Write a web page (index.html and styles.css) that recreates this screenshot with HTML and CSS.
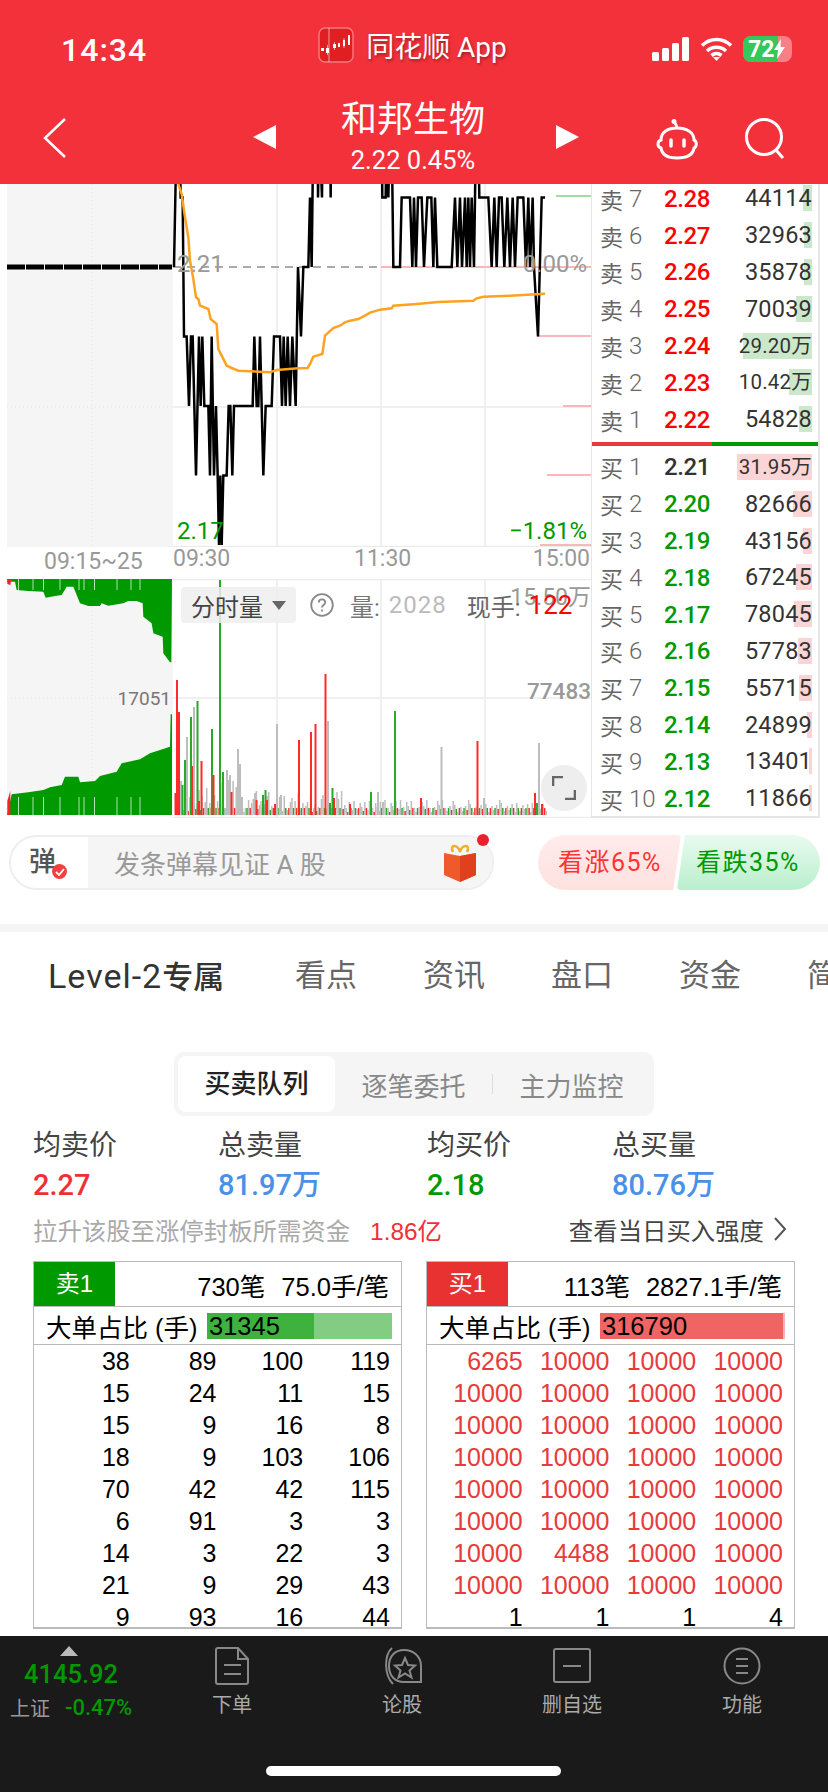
FILE: index.html
```html
<!DOCTYPE html>
<html lang="zh-CN">
<head>
    <meta charset="UTF-8">
    <meta name="viewport" content="width=device-width, initial-scale=1.0">
    <title>和邦生物</title>
    <link rel="stylesheet" href="styles.css">
</head>
<body>
    <header class="top">
        <div class="status">
            <span class="clock">14:34</span>
            <div class="app-name">
                <svg class="logo" width="36" height="36" viewBox="0 0 36 36">
                    <rect x="1" y="1" width="34" height="34" rx="6" fill="#e01f22" stroke="#f7777c" stroke-width="1.5"/>
                    <path d="M3 24h3v-3H3zM8 26h3v-5H8zM15 21h3v-4h-3zM20 20h2v-4h-2zM25 19h2v-6h-2zM30 18h2V8h-2z" fill="#fff"/>
                    <path d="M9.500 18v10M16.500 15v8M26 11v10M11 1v34" stroke="#fff" stroke-width=".8" stroke-opacity=".7"/>
                </svg>
                <span>同花顺 App</span>
            </div>
            <div class="status-icons">
                <svg width="38" height="24" viewBox="0 0 38 24" fill="#fff">
                    <rect x="0" y="15" width="7" height="9" rx="1.5"/>
                    <rect x="10" y="11" width="7" height="13" rx="1.5"/>
                    <rect x="20" y="6" width="7" height="18" rx="1.5"/>
                    <rect x="30" y="0" width="7" height="24" rx="1.5"/>
                </svg>
                <svg width="33" height="24" viewBox="0 0 33 24" fill="none" stroke="#fff" stroke-width="3.6">
                    <path d="M2 8.500c8.500-8 20.500-8 29 0M7 14c5.500-5 13.500-5 19 0M11.500 18.500c3-2.500 7-2.500 10 0"/>
                    <path d="M16.500 24l-3.500-4h7z" fill="#fff" stroke="none"/>
                </svg>
                <div class="battery">
                    <div class="battery-fill"></div>
                    <span>72</span>
                    <svg width="11" height="20" viewBox="0 0 11 20"><path d="M7 0L0 11h4l-1 9 8-12H6.500z" fill="#fff"/></svg>
                </div>
            </div>
        </div>
        <div class="nav">
            <svg class="back" width="24" height="42" viewBox="0 0 24 42" fill="none" stroke="#fff" stroke-width="2.500"><path d="M22 2L2 21l20 19"/></svg>
            <div class="stock">
                <i class="tri-left"></i>
                <div class="stock-name">
                    <h1>和邦生物</h1>
                    <p>2.22 0.45%</p>
                </div>
                <i class="tri-right"></i>
            </div>
            <div class="nav-icons">
                <svg width="46" height="42" viewBox="0 0 46 42" fill="none" stroke="#fff" stroke-width="3">
                    <circle cx="19" cy="3.500" r="2.500" fill="#fff" stroke="none"/>
                    <path d="M19 4c2 2 3 4 3 6"/>
                    <path d="M6 22c0-8 7-12 16-12s17 4 17 12c3 1 3 7 0 8-1 7-8 10-17 10S7 37 6 30c-4-1-4-7 0-8z"/>
                    <path d="M16 22v6M29 22v6" stroke-linecap="round" stroke-width="3.500"/>
                </svg>
                <svg width="42" height="42" viewBox="0 0 42 42" fill="none" stroke="#fff" stroke-width="3">
                    <circle cx="19" cy="19" r="17.500"/>
                    <path d="M31 32l7 8"/>
                </svg>
            </div>
        </div>
    </header>

    <main class="quote">
        <div class="charts">
            <div class="price-chart">
                <svg id="priceSvg" class="chart-svg" viewBox="7 184 584 363"></svg>
                <span class="tag tag-base">2.21</span>
                <span class="tag tag-pct">0.00%</span>
                <span class="tag tag-low">2.17</span>
                <span class="tag tag-lowpct">−1.81%</span>
            </div>
            <div class="times">
                <span class="time-pre">09:15~25</span>
                <span class="time-open">09:30</span>
                <span class="time-mid">11:30</span>
                <span class="time-end">15:00</span>
            </div>
            <div class="volume-chart">
                <svg id="volumeSvg" class="chart-svg" viewBox="7 579 584 239"></svg>
                <span class="vol-pre">17051</span>
                <span class="vol-max">15.50万</span>
                <span class="vol-mid">77483</span>
                <div class="vol-bar">
                    <div class="vol-chip">分时量<i class="caret"></i></div>
                    <svg width="24" height="24" viewBox="0 0 24 24" fill="none" stroke="#888" stroke-width="1.800">
                        <circle cx="12" cy="12" r="10.800"/>
                        <path d="M8.800 9.500c0-4.300 6.400-4.300 6.400 0 0 2.500-3.200 2.500-3.200 5"/>
                        <path d="M12 16.500v2"/>
                    </svg>
                    <span class="vol-key vol-key-first">量:</span>
                    <span class="vol-num">2028</span>
                    <span class="vol-key vol-key-now">现手:</span>
                    <span class="vol-now">122</span>
                </div>
                <div class="expand">
                    <svg width="24" height="24" viewBox="0 0 24 24" fill="none" stroke="#666" stroke-width="2.600"><path d="M1 10V1h10M23 14v9H13"/></svg>
                </div>
            </div>
        </div>
        <div class="book">
            <div id="sellRows" class="book-sell"></div>
            <div class="book-line"></div>
            <div id="buyRows" class="book-buy"></div>
        </div>
    </main>

    <section class="comment-bar">
        <div class="bullet">
            <div class="bullet-icon">弹<i class="bullet-check"><svg width="10" height="8" viewBox="0 0 10 8" fill="none" stroke="#fff" stroke-width="1.800"><path d="M1 4l3 3 5-6"/></svg></i></div>
            <div class="bullet-input">
                <span>发条弹幕见证 A 股</span>
                <svg width="34" height="38" viewBox="0 0 34 38">
                    <path d="M10 8C6 0 15 0 17 8c2-8 11-8 7 0" fill="none" stroke="#f0ac2c" stroke-width="2.500"/>
                    <path d="M1 9l16 3 16-3v22l-16 7-16-7z" fill="#ee5a2b"/>
                    <path d="M17 12l16-3v22l-16 7z" fill="#e1401f"/>
                </svg>
                <i class="bullet-dot"></i>
            </div>
        </div>
        <div class="vote">
            <div class="vote-up">看涨65%</div>
            <div class="vote-down">看跌35%</div>
        </div>
    </section>

    <nav class="tabs">
        <span class="tab-on"><em>Level-2</em>专属</span>
        <span>看点</span>
        <span>资讯</span>
        <span>盘口</span>
        <span>资金</span>
        <span>简况</span>
    </nav>

    <div class="segment">
        <span class="seg-on">买卖队列</span>
        <span>逐笔委托</span>
        <i class="seg-sep"></i>
        <span>主力监控</span>
    </div>

    <div class="stats">
        <div><label>均卖价</label><b class="red">2.27</b></div>
        <div><label>总卖量</label><b class="blue">81.97万</b></div>
        <div><label>均买价</label><b class="green">2.18</b></div>
        <div><label>总买量</label><b class="blue">80.76万</b></div>
    </div>

    <div class="needs">
        <span class="needs-text">拉升该股至涨停封板所需资金</span>
        <span class="needs-num">1.86亿</span>
        <span class="needs-link">查看当日买入强度
            <svg width="14" height="24" viewBox="0 0 14 24" fill="none" stroke="#555" stroke-width="2"><path d="M2 1l10 11L2 23"/></svg>
        </span>
    </div>

    <div class="queues">
        <div class="queue">
            <div class="queue-head">
                <span class="queue-tag tag-sell">卖1</span>
                <span>730笔</span>
                <span>75.0手/笔</span>
            </div>
            <div class="queue-big">
                <span class="big-label">大单占比 (手)</span>
                <div class="big-bar bar-sell"><div class="big-fill" style="width:57.6%"></div><span>31345</span></div>
            </div>
            <div id="sellQueue" class="queue-body"></div>
        </div>
        <div class="queue">
            <div class="queue-head">
                <span class="queue-tag tag-buy">买1</span>
                <span>113笔</span>
                <span>2827.1手/笔</span>
            </div>
            <div class="queue-big">
                <span class="big-label">大单占比 (手)</span>
                <div class="big-bar bar-buy"><div class="big-fill" style="width:99%"></div><span>316790</span></div>
            </div>
            <div id="buyQueue" class="queue-body queue-red"></div>
        </div>
    </div>

    <footer class="bottom">
        <div class="foot-main">
            <div class="index">
                <i class="index-arrow"></i>
                <div class="index-num">4145.92</div>
                <div class="index-line"><span>上证</span><b>-0.47%</b></div>
            </div>
            <div class="foot-tab">
                <svg width="36" height="38" viewBox="0 0 36 38" fill="none" stroke="#888" stroke-width="2">
                    <path d="M2 3a2 2 0 0 1 2-2h20l10 11v23a2 2 0 0 1-2 2H4a2 2 0 0 1-2-2z"/>
                    <path d="M24 1v11h10M10 18h17M10 27h17"/>
                </svg>
                <span>下单</span>
            </div>
            <div class="foot-tab">
                <svg width="42" height="38" viewBox="0 0 42 38" fill="none" stroke="#888" stroke-width="2">
                    <path d="M11 1C3 8 3 28 12 37"/>
                    <path d="M8 19C8 9 14 3 23 3s17 6 17 16v16H23C14 35 8 29 8 19z"/>
                    <path d="M24 11l3 7 7 .5-5.500 5 2 7-6.500-4-6.500 4 2-7-5.500-5 7-.5z"/>
                </svg>
                <span>论股</span>
            </div>
            <div class="foot-tab">
                <svg width="38" height="38" viewBox="0 0 38 38" fill="none" stroke="#888" stroke-width="2">
                    <rect x="1" y="2" width="36" height="33" rx="2"/>
                    <path d="M10 19h18"/>
                </svg>
                <span>删自选</span>
            </div>
            <div class="foot-tab">
                <svg width="38" height="38" viewBox="0 0 38 38" fill="none" stroke="#888" stroke-width="2">
                    <circle cx="19" cy="19" r="17.500"/>
                    <path d="M13 12h12M13 19h12M13 26h12"/>
                </svg>
                <span>功能</span>
            </div>
        </div>
        <div class="home-bar"></div>
    </footer>

    <script>
        let sellData = [
            ["7", "2.28", "44114", 9.5], ["6", "2.27", "32963", 8], ["5", "2.26", "35878", 8],
            ["4", "2.25", "70039", 16], ["3", "2.24", "29.20万", 69], ["2", "2.23", "10.42万", 23],
            ["1", "2.22", "54828", 13]
        ];
        let buyData = [
            ["1", "2.21", "31.95万", 75], ["2", "2.20", "82666", 19], ["3", "2.19", "43156", 9.5],
            ["4", "2.18", "67245", 16], ["5", "2.17", "78045", 18], ["6", "2.16", "57783", 14],
            ["7", "2.15", "55715", 13], ["8", "2.14", "24899", 5.5], ["9", "2.13", "13401", 3],
            ["10", "2.12", "11866", 3]
        ];

        let bookRow = (name, row, priceClass, barClass) => {
            let small = row[2].includes("万") ? " book-qty-small" : "";
            return `
                <div class="book-row">
                    <span class="book-name">${name}<em>${row[0]}</em></span>
                    <span class="book-price ${priceClass}">${row[1]}</span>
                    <span class="book-qty${small}">
                        <i class="${barClass}" style="width:${row[3]}px"></i>
                        <b>${row[2]}</b>
                    </span>
                </div>`;
        };

        document.querySelector("#sellRows").innerHTML = sellData.map((r) => bookRow("卖", r, "price-red", "bar-green")).join("");
        document.querySelector("#buyRows").innerHTML = buyData.map((r, i) => bookRow("买", r, i === 0 ? "price-flat" : "price-green", "bar-red")).join("");

        let sellQueue = [
            [38, 89, 100, 119], [15, 24, 11, 15], [15, 9, 16, 8], [18, 9, 103, 106], [70, 42, 42, 115],
            [6, 91, 3, 3], [14, 3, 22, 3], [21, 9, 29, 43], [9, 93, 16, 44]
        ];
        let t = 10000;
        let buyQueue = [
            [6265, t, t, t], [t, t, t, t], [t, t, t, t], [t, t, t, t], [t, t, t, t],
            [t, t, t, t], [t, 4488, t, t], [t, t, t, t], [1, 1, 1, 4]
        ];

        let queueHtml = (rows) => rows.map((row) => {
            let cls = row[0] === 1 ? "queue-row queue-last" : "queue-row";
            return `<div class="${cls}">` + row.map((n) => `<span>${n}</span>`).join("") + "</div>";
        }).join("");

        document.querySelector("#sellQueue").innerHTML = queueHtml(sellQueue);
        document.querySelector("#buyQueue").innerHTML = queueHtml(buyQueue);

        // price chart, points are [x, level]; level 0 is 2.21 and each step is one cent down
        let levelY = (lv) => 267 + lv * 69.5;
        let part1 = [[12,0],[20,-2],[28,-2],[32,-1],[38,-1],[42,1],[50,1],[57,2],[63,1],[68,1],[78,3],[87,1],[92,2],[97,1],[103,2],[115,2],[120,3],[125,1],[132,3],[138,2],[143,3],[147,4],[151,3],[155,4],[160,3],[170,3],[176,2],[181,2],[187,3],[192,2],[248,2],[253,1],[260,2],[265,2],[270,1],[280,3],[287,2],[305,2],[312,1],[330,1],[336,2],[341,1],[347,2],[353,1],[360,2],[367,1],[377,2],[384,0],[393,1],[400,0],[415,0],[420,-1],[425,0],[430,-2],[443,-2],[444,-1],[448,-2],[456,-1],[458,-2],[480,-2],[482,-1],[484,-2]];
        let part2 = [[95,-2],[97,-1],[107,-1],[110,-2],[115,-1],[120,-2],[125,-2],[130,0],[150,0],[155,-1],[180,-1],[187,0],[192,-1],[198,0],[204,-1],[215,-1],[222,0],[232,-1],[244,-1],[250,0],[255,-1],[262,0],[305,0],[315,-1],[322,0],[330,-1],[336,0],[345,-1],[350,0],[355,-1],[360,0],[365,-1],[372,0],[378,-2],[385,-2],[388,-1],[415,-1],[425,0],[433,-1],[440,0],[447,-1],[455,-1],[463,0],[472,-1],[480,0],[488,-1],[495,0],[503,-1],[520,-1],[528,0],[535,-1],[540,0],[548,-1],[552,0],[564,1],[575,-1],[585,-1]];
        let avg1 = [[25,0],[35,30],[45,100],[55,160],[60,230],[70,285],[78,340],[85,345],[90,365],[115,375],[122,405],[140,420],[145,495],[155,515],[170,545],[185,552],[205,560],[300,565],[320,558],[385,553],[413,552],[420,540],[430,518],[457,510],[465,455],[490,432],[510,425],[525,415],[540,410]];
        let avg2 = [[25,405],[45,395],[60,386],[90,377],[125,373],[130,365],[200,360],[265,354],[370,350],[380,343],[400,338],[480,335],[585,329]];

        let linePoints = part1.map((p) => `${170 + p[0] / 3},${levelY(p[1])}`)
            .concat(part2.map((p) => `${350 + p[0] / 3},${levelY(p[1])}`)).join(" ");
        let avgPoints = avg1.map((p) => `${170 + p[0] / 3},${184 + p[1] / 3}`)
            .concat(avg2.map((p) => `${350 + p[0] / 3},${184 + p[1] / 3}`)).join(" ");

        let depthMarks = [[556, 196, "#a5dba5"], [381, 267, "#f6b8b8"], [537, 336, "#f6b8b8"], [563, 406, "#f6b8b8"], [547, 475, "#f6b8b8"], [540, 545, "#f6b8b8"]];
        let depthHtml = depthMarks.map((d) => `<path d="M${d[0]} ${d[1]}H591" stroke="${d[2]}" stroke-width="2"/>`).join("");

        document.querySelector("#priceSvg").innerHTML = `
            <rect x="7" y="184" width="166" height="363" fill="#f5f5f5"/>
            <path d="M92 184V547M7 407H173" stroke="#e6e6e6" stroke-dasharray="1 3"/>
            <path d="M277 184V547M381 184V547M485 184V547M173 407H591M173 546.500H591" stroke="#ececec" stroke-width="1.500"/>
            ${depthHtml}
            <path d="M173 267H381" stroke="#aaa" stroke-width="2" stroke-dasharray="8 6"/>
            <path d="M7 267H172" stroke="#000" stroke-width="5" stroke-dasharray="18 1"/>
            <polyline points="${linePoints}" fill="none" stroke="#000" stroke-width="2.500"/>
            <polyline points="${avgPoints}" fill="none" stroke="#ffa21f" stroke-width="2.500"/>`;

        // pre-market volume, traced in crop pixels of 3x
        let preTop = [[22,20],[45,20],[50,45],[85,48],[130,50],[137,68],[165,63],[185,60],[200,35],[220,35],[240,85],[265,93],[300,93],[305,85],[325,92],[370,85],[385,78],[410,78],[428,85],[430,125],[455,145],[460,175],[488,185],[490,235],[510,262],[514,262]];
        let preBottom = [[22,718],[30,680],[35,658],[85,652],[130,645],[150,637],[185,630],[195,605],[235,605],[240,622],[285,618],[300,603],[350,590],[365,565],[420,553],[450,535],[510,515],[512,418],[516,418]];
        let toPre = (p) => `${p[0] / 3},${575 + p[1] / 3}`;
        let topShape = "7.300,579 " + preTop.map(toPre).join(" ") + " 172,579";
        let bottomShape = preBottom.map(toPre).join(" ") + " 172,815 7.300,815";
        let gaps = [18.500, 33, 43.500, 60, 79, 84, 94.500, 117, 131, 140];
        let gapHtml = gaps.map((x) => `<path d="M${x} 579V590M${x} 797V815" stroke="#fff" stroke-opacity=".7" stroke-width="1"/>`).join("");

        let colors = { r: "#ff2a2a", g: "#2aa82a", s: "#bdbdbd" };
        let tall = [
            [174.5,793,"r"],[176,680,"r"],[178,712,"r"],[180,781,"s"],[181.5,785,"g"],[184,760,"g"],[186,737,"s"],[190,717,"g"],[191.5,766,"r"],[193,707,"s"],[196.500,701,"g"],[198,801,"r"],[200.500,761,"r"],
            [211,729,"g"],[212.500,775,"r"],[219,580,"g"],[222,772,"g"],[226,770,"s"],[229,775,"s"],[230.500,792,"r"],[237,749,"s"],[239,764,"s"],[241,797,"s"],[254,793,"s"],[255.500,800,"r"],[262,795,"g"],[264.500,790,"g"],[266,800,"r"],[274,804,"r"],[276,724,"s"],[280,795,"s"],[298,740,"r"],
            [310,732,"r"],[314.500,724,"r"],[324.500,674,"r"],[327,721,"s"],[329,803,"g"],[331.500,788,"g"],[333,798,"r"],[349,804,"r"],[370,792,"g"],[377,792,"s"],[382,802,"s"],[394,711,"g"],[420,798,"r"],[440.500,747,"s"],[476.500,741,"r"],[483,798,"s"],[534,793,"r"],[536,803,"g"],[538,743,"s"],[541,804,"r"]
        ];
        let bars = "";
        for (let i = 0; i < 240; i++) {
            let x = 175 + i * 1.55;
            let max = x < 240 ? 34 : x < 345 ? 22 : 13;
            let h = 3 + (i * 37 + (i % 7) * 11) % max;
            let c = i % 5 === 1 ? "g" : i % 5 === 3 ? "r" : "s";
            if (c !== "s") h = Math.min(h, 7);
            bars += `<rect x="${x}" y="${815 - h}" width="1.500" height="${h}" fill="${colors[c]}"/>`;
        }
        tall.forEach((b) => {
            bars += `<rect x="${b[0]}" y="${b[1]}" width="2" height="${815 - b[1]}" fill="${colors[b[2]]}"/>`;
        });

        document.querySelector("#volumeSvg").innerHTML = `
            <rect x="7" y="579" width="166" height="236" fill="#f5f5f5"/>
            <path d="M92 579V815M7 698H173" stroke="#e6e6e6" stroke-dasharray="1 3"/>
            <path d="M173 579.500H591M277 579V818M381 579V818M485 579V818M173 698H591M173 817.500H591" stroke="#ececec" stroke-width="1.500"/>
            <polygon points="${topShape}" fill="#009900"/>
            <polygon points="${bottomShape}" fill="#009900"/>
            ${gapHtml}
            <path d="M7.300 579h4l-1 6-3-1zM7.300 815v-14l3-10v24z" fill="#ff2020"/>
            ${bars}`;
    </script>
</body>
</html>
```

FILE: styles.css
```css
* {
    margin: 0;
    padding: 0;
    box-sizing: border-box;
    font-family: Roboto, "Noto Sans CJK SC", sans-serif;
}
html, body {
    width: 828px;
    height: 1792px;
    overflow: hidden;
    background: #fff;
}
i, em {
    font-style: normal;
}

/* red header */
.top {
    height: 184px;
    background: #f2313b;
    color: #fff;
    position: relative;
    z-index: 5;
}
.status {
    height: 90px;
    display: grid;
    grid-template-columns: 1fr auto 1fr;
    align-items: center;
    padding: 0 36px 0 61px;
}
.clock {
    font-size: 32px;
    font-weight: 500;
    letter-spacing: 1px;
    padding-top: 10px;
}
.app-name {
    display: flex;
    align-items: center;
    gap: 12px;
    font-size: 28px;
    text-shadow: 1px 2px 3px rgba(0, 0, 0, .35);
    margin-left: -28px;
}
.status-icons {
    display: flex;
    align-items: center;
    justify-content: flex-end;
    gap: 10px;
    padding-top: 8px;
}
.battery {
    width: 49px;
    height: 26px;
    border-radius: 8px;
    background: #f77f85;
    position: relative;
    display: flex;
    align-items: center;
    padding-left: 5px;
    overflow: hidden;
    font-size: 23px;
    font-weight: 700;
}
.battery-fill {
    position: absolute;
    left: 0;
    top: 0;
    bottom: 0;
    width: 35px;
    background: #34c759;
}
.battery span, .battery svg {
    position: relative;
}
.nav {
    height: 94px;
    display: grid;
    grid-template-columns: 253px 326px 1fr;
    align-items: center;
}
.back {
    margin-left: 43px;
    margin-top: 2px;
}
.stock {
    display: flex;
    align-items: center;
    justify-content: space-between;
}
.tri-left, .tri-right {
    width: 0;
    height: 0;
    border-top: 12.5px solid transparent;
    border-bottom: 12.5px solid transparent;
}
.tri-left {
    border-right: 23px solid #fff;
}
.tri-right {
    border-left: 23px solid #fff;
}
.stock-name {
    text-align: center;
    padding-right: 6px;
}
.stock-name h1 {
    font-size: 36px;
    font-weight: 400;
    line-height: 46px;
    letter-spacing: 0;
}
.stock-name p {
    font-size: 25.5px;
    line-height: 34px;
}
.nav-icons {
    display: flex;
    justify-content: flex-end;
    align-items: center;
    gap: 44px;
    padding-right: 41px;
    padding-top: 4px;
}

/* chart and order book */
.quote {
    height: 634px;
    display: flex;
    padding-left: 7px;
}
.charts {
    width: 584px;
}
.chart-svg {
    display: block;
    width: 584px;
    overflow: hidden;
}
.price-chart {
    height: 363px;
    position: relative;
}
.price-chart .chart-svg {
    height: 363px;
}
.tag {
    position: absolute;
    font-size: 24px;
    line-height: 28px;
}
.tag-base {
    left: 170px;
    top: 66px;
    color: #999;
}
.tag-pct {
    right: 4px;
    top: 66px;
    color: #999;
}
.tag-low {
    left: 170px;
    top: 333px;
    color: #090;
}
.tag-lowpct {
    right: 4px;
    top: 333px;
    color: #090;
}
.times {
    height: 32px;
    position: relative;
    font-size: 23px;
    color: #999;
}
.times span {
    position: absolute;
    top: 0;
    line-height: 24px;
}
.time-pre {
    left: 37px;
    top: 3px !important;
}
.time-open {
    left: 166px;
}
.time-mid {
    left: 347px;
}
.time-end {
    right: 1px;
}
.volume-chart {
    height: 239px;
    position: relative;
}
.volume-chart .chart-svg {
    height: 239px;
}
.vol-pre {
    position: absolute;
    right: 420px;
    top: 108px;
    font-size: 19px;
    line-height: 24px;
    color: #777;
}
.vol-max, .vol-mid {
    position: absolute;
    right: 0;
    font-size: 23px;
    line-height: 28px;
    color: #999;
}
.vol-max {
    top: 5px;
}
.vol-mid {
    top: 98px;
    font-size: 22.5px;
    font-weight: 500;
}
.vol-bar {
    position: absolute;
    left: 174px;
    top: 8px;
    height: 36px;
    display: flex;
    align-items: center;
    font-size: 24px;
}
.vol-chip {
    width: 115px;
    height: 36px;
    border-radius: 4px;
    background: rgba(238, 238, 238, .85);
    color: #444;
    display: flex;
    align-items: center;
    padding-left: 10px;
    margin-right: 14px;
}
.caret {
    width: 0;
    height: 0;
    margin-left: 9px;
    border-left: 7px solid transparent;
    border-right: 7px solid transparent;
    border-top: 9px solid #666;
}
.vol-key {
    color: #777;
}
.vol-key-first {
    margin-left: 16px;
}
.vol-num {
    color: #bbb;
    margin-left: 9px;
    letter-spacing: 1px;
}
.vol-key-now {
    color: #666;
    margin-left: 20px;
}
.vol-now {
    color: #f00;
    margin-left: 8px;
    font-size: 26px;
}
.expand {
    position: absolute;
    left: 534px;
    top: 186px;
    width: 46px;
    height: 46px;
    border-radius: 50%;
    background: #eee;
    display: flex;
    align-items: center;
    justify-content: center;
}
.book {
    width: 229px;
    height: 634px;
    border-left: 1px solid #e6e6e6;
    border-right: 2px solid #e6e6e6;
    border-bottom: 2px solid #e6e6e6;
    display: flex;
    flex-direction: column;
    overflow: hidden;
}
.book-sell {
    height: 258px;
    flex: none;
    display: flex;
    flex-direction: column;
    justify-content: flex-end;
    padding-bottom: 4px;
    overflow: hidden;
}
.book-line {
    height: 4px;
    flex: none;
    background: linear-gradient(to right, #e83a3a 53%, #009900 53%);
}
.book-buy {
    flex: none;
    padding-top: 3px;
}
.book-row {
    height: 36.8px;
    flex: none;
    display: flex;
    align-items: center;
    padding-left: 8px;
    position: relative;
}
.book-name {
    width: 64px;
    color: #666;
    font-size: 23px;
    display: flex;
    align-items: center;
}
.book-name em {
    font-size: 24px;
    font-weight: 300;
    margin-left: 6px;
}
.book-price {
    font-size: 24px;
    font-weight: 500;
    letter-spacing: -.4px;
}
.price-red {
    color: #f00;
}
.price-green {
    color: #090;
}
.price-flat {
    color: #333;
}
.book-qty {
    position: absolute;
    right: 6px;
    top: 5px;
    height: 26px;
    width: 80px;
    text-align: right;
    font-size: 23.5px;
    line-height: 26px;
    color: #333;
}
.book-qty i {
    position: absolute;
    right: 0;
    top: 0;
    bottom: 0;
}
.book-qty b {
    position: relative;
    font-weight: 400;
    letter-spacing: .2px;
}
.book-qty-small {
    font-size: 20.5px;
}
.bar-green {
    background: #cbe8cb;
}
.bar-red {
    background: #fbd5d5;
}

/* bullet comment line */
.comment-bar {
    display: flex;
    justify-content: space-between;
    padding: 17px 9px 0;
    height: 114px;
    border-bottom: 8px solid #f5f5f5;
}
.bullet {
    width: 485px;
    height: 55px;
    border: 2px solid #eee;
    border-radius: 28px;
    display: flex;
    position: relative;
    overflow: visible;
    background: #fff;
}
.bullet-icon {
    width: 77px;
    font-size: 27px;
    font-weight: 500;
    color: #555;
    padding-left: 18px;
    line-height: 50px;
    position: relative;
}
.bullet-check {
    position: absolute;
    left: 41px;
    top: 27px;
    width: 15px;
    height: 15px;
    border-radius: 50%;
    background: #f04040;
    display: flex;
    align-items: center;
    justify-content: center;
}
.bullet-input {
    flex: 1;
    background: #f5f5f5;
    border-radius: 0 26px 26px 0;
    display: flex;
    align-items: center;
    justify-content: space-between;
    padding: 0 15px 0 26px;
    font-size: 26px;
    color: #999;
}
.bullet-dot {
    position: absolute;
    right: 3px;
    top: -3px;
    width: 12px;
    height: 12px;
    border-radius: 50%;
    background: #e8212c;
}
.vote {
    display: flex;
    width: 282px;
    margin-right: -1px;
    font-size: 25px;
    line-height: 55px;
    height: 55px;
    letter-spacing: 1.5px;
}
.vote-up, .vote-down {
    width: 143px;
    height: 55px;
    flex: none;
}
.vote-up {
    background: linear-gradient(to bottom, #ffeceb, #fde1df);
    color: #f33;
    border-radius: 28px 4px 4px 28px;
    clip-path: polygon(0 0, 100% 0, 94.5% 100%, 0 100%);
    padding-left: 20px;
}
.vote-down {
    background: linear-gradient(to bottom, #e9fbf0, #b9efcc);
    color: #090;
    margin-left: -4px;
    border-radius: 4px 28px 28px 4px;
    clip-path: polygon(5.5% 0, 100% 0, 100% 100%, 0 100%);
    padding-left: 19px;
}

/* tabs */
.tabs {
    height: 76px;
    display: flex;
    gap: 66px;
    padding: 21px 0 0 48px;
    font-size: 31px;
    color: #666;
    white-space: nowrap;
    overflow: hidden;
}
.tabs span {
    flex: none;
    line-height: 46px;
}
.tab-on {
    color: #333;
    font-weight: 500;
    position: relative;
    width: 181px;
}
.tab-on em {
    font-size: 34px;
    font-weight: 400;
    letter-spacing: 1px;
}
.tab-on::after {
    content: "";
    position: absolute;
    left: 75px;
    bottom: -15px;
    width: 32px;
    height: 6px;
    border-radius: 3px;
    background: #f8312f;
}
.segment {
    width: 480px;
    height: 64px;
    margin: 44px 0 0 174px;
    padding: 4px;
    background: #f5f5f5;
    border-radius: 10px;
    display: flex;
    align-items: center;
    font-size: 26px;
    color: #888;
}
.segment span {
    width: 157px;
    text-align: center;
}
.seg-on {
    height: 56px;
    line-height: 56px;
    background: #fff;
    border-radius: 8px;
    color: #222;
    font-weight: 500;
}
.seg-sep {
    width: 1px;
    height: 20px;
    background: #ddd;
}

/* summary numbers */
.stats {
    display: grid;
    grid-template-columns: 185px 209px 185px 1fr;
    padding: 10px 0 0 33px;
}
.stats label {
    display: block;
    font-size: 28px;
    line-height: 40px;
    color: #444;
}
.stats b {
    display: block;
    font-size: 29px;
    line-height: 38px;
    font-weight: 500;
}
.red {
    color: #ee2f36;
}
.green {
    color: #090;
}
.blue {
    color: #4a90e8;
}
.needs {
    display: flex;
    align-items: center;
    padding: 10px 41px 0 33px;
    height: 40px;
    font-size: 24.4px;
    white-space: nowrap;
}
.needs-text {
    color: #aaa;
}
.needs-num {
    color: #ee2f36;
    margin-left: 20px;
    font-family: "Liberation Sans", "Noto Sans CJK SC", sans-serif;
}
.needs-link {
    margin-left: auto;
    color: #444;
    display: flex;
    align-items: center;
    gap: 9px;
}

/* buy and sell queues */
.queues {
    display: flex;
    gap: 24px;
    padding: 17px 0 0 33px;
}
.queue {
    width: 369px;
    height: 368px;
    border: 1px solid #bbb;
    border-bottom-width: 2px;
    overflow: hidden;
    font-family: "Liberation Sans", "Noto Sans CJK SC", sans-serif;
    color: #000;
}
.queue span {
    font-family: "Liberation Sans", "Noto Sans CJK SC", sans-serif;
}
.queue-head {
    height: 45px;
    display: flex;
    align-items: center;
    justify-content: flex-end;
    gap: 16px;
    padding-right: 12px;
    border-bottom: 1px solid #bbb;
    font-size: 25.5px;
    position: relative;
}
.queue-tag {
    position: absolute;
    left: 0;
    top: 0;
    width: 81px;
    height: 44px;
    line-height: 44px;
    font-size: 24px;
    text-align: center;
    color: #fff;
}
.tag-sell {
    background: #009900;
}
.tag-buy {
    background: #e83232;
}
.queue-big {
    height: 38px;
    display: flex;
    align-items: center;
    border-bottom: 1px solid #bbb;
    padding: 0 9px 0 12px;
    font-size: 25.5px;
}
.big-label {
    width: 161px;
    flex: none;
    white-space: nowrap;
}
.big-bar {
    flex: 1;
    height: 26px;
    position: relative;
    line-height: 26px;
}
.bar-sell {
    background: #82cd82;
}
.bar-buy {
    background: #f9b4b4;
}
.big-fill {
    position: absolute;
    left: 0;
    top: 0;
    bottom: 0;
}
.bar-sell .big-fill {
    background: #3eb13e;
}
.bar-buy .big-fill {
    background: #f06464;
}
.big-bar span {
    position: relative;
    padding-left: 2px;
}
.queue-row {
    height: 32px;
    display: grid;
    grid-template-columns: repeat(4, 1fr);
    padding: 0 11px 0 9px;
    text-align: right;
    font-size: 25px;
    line-height: 32px;
}
.queue-red {
    color: #e83a3a;
}
.queue-last {
    color: #000;
}

/* dark footer */
.bottom {
    margin-top: 7px;
    height: 156px;
    background: #1a1a1a;
    color: #aaa;
}
.foot-main {
    display: flex;
    height: 130px;
}
.index {
    width: 147px;
    flex: none;
    padding-left: 10px;
    position: relative;
}
.index-arrow {
    display: block;
    width: 0;
    height: 0;
    margin: 10px 0 0 50px;
    border-left: 9px solid transparent;
    border-right: 9px solid transparent;
    border-bottom: 10px solid #bbb;
}
.index-num {
    font-size: 25.5px;
    font-weight: 500;
    color: #090;
    line-height: 30px;
    margin: 3px 0 0 14px;
}
.index-line {
    display: flex;
    align-items: center;
    gap: 15px;
    margin-top: 4px;
    font-size: 20px;
    color: #999;
}
.index-line b {
    font-size: 22px;
    font-weight: 500;
    color: #090;
}
.foot-tab {
    width: 170px;
    flex: none;
    display: flex;
    flex-direction: column;
    align-items: center;
    padding-top: 11px;
    font-size: 20px;
}
.foot-tab span {
    margin-top: 6px;
    line-height: 28px;
}
.home-bar {
    width: 295px;
    height: 10px;
    border-radius: 5px;
    background: #fff;
    margin-left: 266px;
}
```
